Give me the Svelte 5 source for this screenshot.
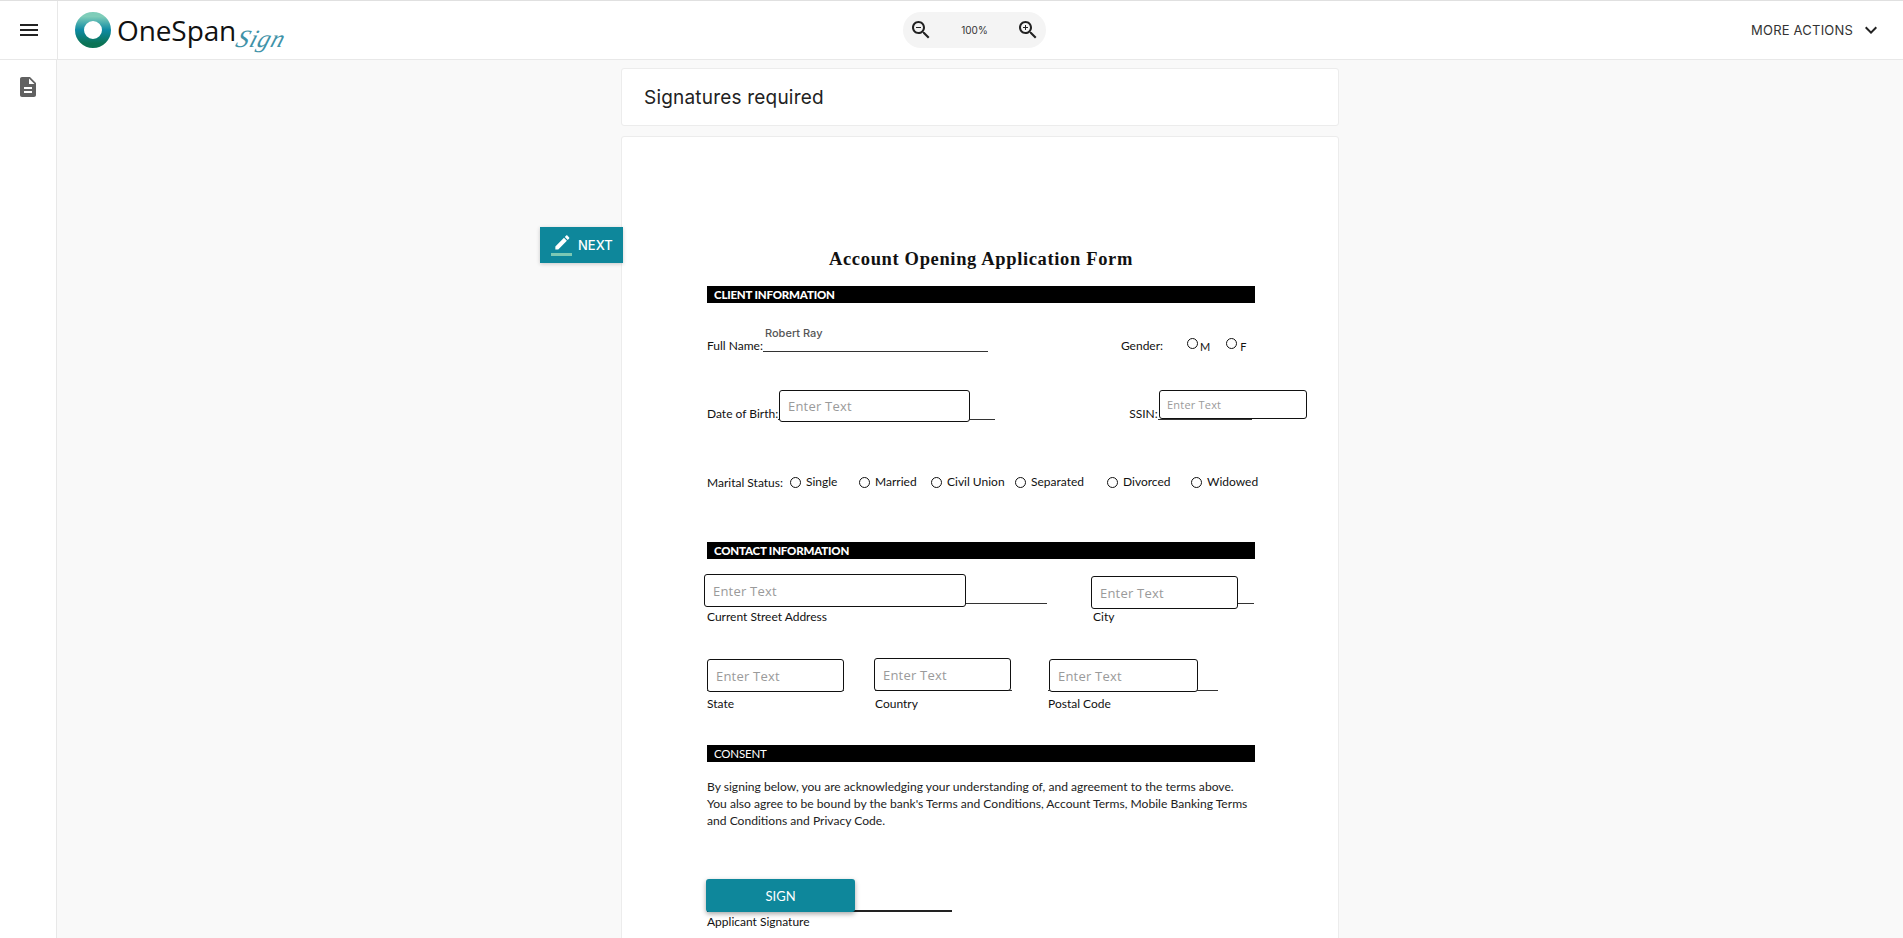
<script>
  const fields = [
    { x: 157, y: 253, w: 191, h: 32, size: 13 },
    { x: 537, y: 253, w: 148, h: 29, size: 11, pad: 7 },
    { x: 82, y: 437, w: 262, h: 33, size: 13 },
    { x: 469, y: 439, w: 147, h: 33, size: 13 },
    { x: 85, y: 522, w: 137, h: 33, size: 13 },
    { x: 252, y: 521, w: 137, h: 33, size: 13 },
    { x: 427, y: 522, w: 149, h: 33, size: 13 }
  ];
  const marital = [
    { label: "Single", w: 69 },
    { label: "Married", w: 72 },
    { label: "Civil Union", w: 84 },
    { label: "Separated", w: 92 },
    { label: "Divorced", w: 84 },
    { label: "Widowed", w: 66 }
  ];
</script>

<div class="app">
  <header class="topbar">
    <button class="menu" aria-label="Menu">
      <svg width="24" height="24" viewBox="0 0 24 24"><path d="M3 18h18v-2H3v2zm0-5h18v-2H3v2zm0-7v2h18V6H3z" fill="#222"/></svg>
    </button>
    <div class="logo">
      <svg width="38" height="38" viewBox="0 0 38 38">
        <defs>
          <linearGradient id="ring" x1="0" y1="0" x2="0" y2="1">
            <stop offset="0" stop-color="#7fcdb9"/>
            <stop offset="0.5" stop-color="#0e8aa3"/>
            <stop offset="1" stop-color="#0b7355"/>
          </linearGradient>
        </defs>
        <circle cx="19" cy="19" r="13.5" fill="none" stroke="url(#ring)" stroke-width="9"/>
      </svg>
      <span class="brand">OneSpan</span>
      <span class="sign">Sign</span>
    </div>
    <div class="zoom">
      <svg width="24" height="24" viewBox="0 0 24 24"><path d="M15.5 14h-.79l-.28-.27C15.41 12.59 16 11.11 16 9.5 16 5.91 13.09 3 9.5 3S3 5.91 3 9.5 5.91 16 9.5 16c1.61 0 3.09-.59 4.23-1.57l.27.28v.79l5 4.99L20.49 19l-4.99-5zm-6 0C7.01 14 5 11.99 5 9.5S7.01 5 9.5 5 14 7.01 14 9.5 11.99 14 9.5 14zM7 9h5v1H7z" fill="#222"/></svg>
      <span>100%</span>
      <svg width="24" height="24" viewBox="0 0 24 24"><path d="M15.5 14h-.79l-.28-.27C15.41 12.59 16 11.11 16 9.5 16 5.91 13.09 3 9.5 3S3 5.91 3 9.5 5.91 16 9.5 16c1.61 0 3.09-.59 4.23-1.57l.27.28v.79l5 4.99L20.49 19l-4.99-5zm-6 0C7.01 14 5 11.99 5 9.5S7.01 5 9.5 5 14 7.01 14 9.5 11.99 14 9.5 14zM12 10h-2v2H9v-2H7V9h2V7h1v2h2v1z" fill="#222"/></svg>
    </div>
    <div class="actions">
      <span>MORE ACTIONS</span>
      <svg width="24" height="24" viewBox="0 0 24 24"><path d="M7.41 8.59 12 13.17l4.59-4.58L18 10l-6 6-6-6z" fill="#222"/></svg>
    </div>
  </header>

  <div class="body">
    <aside class="sidebar">
      <svg width="24" height="24" viewBox="0 0 24 24"><path d="M14 2H6c-1.1 0-1.99.9-1.99 2L4 20c0 1.1.89 2 1.99 2H18c1.1 0 2-.9 2-2V8l-6-6zm2 16H8v-2h8v2zm0-4H8v-2h8v2zm-3-5V3.5L18.5 9H13z" fill="#616161"/></svg>
    </aside>

    <main class="main">
      <section class="column">
        <div class="notice">Signatures required</div>

        <article class="doc">
          <button class="next">
            <svg width="24" height="24" viewBox="0 0 24 24"><path d="M3 17.25V21h3.75L17.81 9.94l-3.75-3.75L3 17.25zM20.71 7.04c.39-.39.39-1.02 0-1.41l-2.34-2.34c-.39-.39-1.02-.39-1.41 0l-1.83 1.83 3.75 3.75 1.83-1.83z" fill="#fff" transform="translate(3 0) scale(.78)"/><rect x="1" y="20" width="21" height="3" fill="#7cc8b4"/></svg>
            <span>NEXT</span>
          </button>

          <h1>Account Opening Application Form</h1>
          <div class="bar">CLIENT INFORMATION</div>

          <div class="row name-row">
            <span class="robert">Robert Ray</span>
            <span>Full Name:</span><span class="line w-name"></span>
            <span class="gender">Gender:</span>
            <i class="radio r-m"></i><span class="small">M</span>
            <i class="radio r-f"></i><span class="small">F</span>
          </div>

          <div class="row dob-row">
            <span>Date of Birth:</span><span class="line w-dob"></span>
            <span class="ssin">SSIN:</span><span class="line w-ssin"></span>
          </div>

          <div class="row marital-row">
            <span class="marital-label">Marital Status:</span>
            {#each marital as item}
              <span class="option" style="width:{item.w}px"><i class="radio"></i>{item.label}</span>
            {/each}
          </div>

          <div class="bar contact">CONTACT INFORMATION</div>

          <div class="row address-row">
            <div class="cell c-address"><span class="line"></span><span>Current Street Address</span></div>
            <div class="cell c-city"><span class="line"></span><span>City</span></div>
          </div>

          <div class="row region-row">
            <div class="cell c-state"><span class="line"></span><span>State</span></div>
            <div class="cell c-country"><span class="line"></span><span>Country</span></div>
            <div class="cell c-postal"><span class="line"></span><span>Postal Code</span></div>
          </div>

          <div class="bar consent">CONSENT</div>

          <p>By signing below, you are acknowledging your understanding of, and agreement to the terms above.<br/>You also agree to be bound by the bank's Terms and Conditions, Account Terms, Mobile Banking Terms<br/>and Conditions and Privacy Code.</p>

          <div class="signature">
            <span class="line"></span>
            <span>Applicant Signature</span>
            <button class="sign-btn">SIGN</button>
          </div>

          {#each fields as f}
            <div class="field" style="left:{f.x}px;top:{f.y}px;width:{f.w}px;height:{f.h}px;font-size:{f.size}px;padding-left:{f.pad ?? 8}px">Enter Text</div>
          {/each}
        </article>
      </section>
    </main>
  </div>
</div>

<style>
  :global(body) {
    margin: 0;
    overflow: hidden;
    background: #f9f9f9;
  }

  .app {
    height: 938px;
    display: flex;
    flex-direction: column;
    overflow: hidden;
    font-family: "Inter", "Open Sans", sans-serif;
    color: #222;
  }

  .topbar {
    height: 58px;
    flex: none;
    display: grid;
    grid-template-columns: 58px 1fr auto 1fr;
    align-items: center;
    background: #fff;
    border-top: 1px solid #e0e0e0;
    border-bottom: 1px solid #e8e8e8;
  }

  .menu {
    height: 100%;
    padding: 0;
    border: 0;
    border-right: 1px solid #e8e8e8;
    background: none;
    display: flex;
    align-items: center;
    justify-content: center;
  }

  .logo {
    display: flex;
    align-items: center;
    padding-left: 16px;
  }

  .brand {
    margin-left: 5px;
    font-family: "Open Sans", sans-serif;
    font-size: 28px;
    letter-spacing: -0.1px;
    color: #111;
    line-height: 38px;
  }

  .sign {
    font-family: "Liberation Serif", serif;
    font-style: italic;
    font-size: 25px;
    color: #3f92a8;
    margin: 17px 0 0 1px;
    letter-spacing: 1px;
    transform: skewX(-18deg);
  }

  .zoom {
    width: 143px;
    height: 36px;
    box-sizing: border-box;
    padding: 0 6px;
    margin-left: -12px;
    border-radius: 18px;
    background: #f4f4f4;
    display: flex;
    align-items: center;
    justify-content: space-between;
    font-size: 10px;
    color: #333;
  }

  .actions {
    justify-self: end;
    display: flex;
    align-items: center;
    gap: 6px;
    padding-right: 20px;
    font-size: 13px;
    letter-spacing: 0.2px;
    color: #333;
  }

  .body {
    flex: 1;
    display: flex;
    min-height: 0;
  }

  .sidebar {
    width: 57px;
    flex: none;
    background: #fff;
    border-right: 1px solid #e8e8e8;
    display: flex;
    justify-content: center;
    padding-top: 15px;
    box-sizing: border-box;
  }

  .main {
    flex: 1;
    display: flex;
    justify-content: center;
    padding-top: 8px;
    background: #f9f9f9;
  }

  .column {
    width: 718px;
  }

  .notice {
    height: 58px;
    box-sizing: border-box;
    padding-left: 22px;
    display: flex;
    align-items: center;
    background: #fff;
    border: 1px solid #ececec;
    border-radius: 3px;
    font-size: 19px;
    letter-spacing: 0.2px;
    color: #222;
  }

  .doc {
    position: relative;
    height: 820px;
    margin-top: 10px;
    box-sizing: border-box;
    padding: 110px 83px 0 85px;
    background: #fff;
    border: 1px solid #ececec;
    border-radius: 3px;
    font-family: "Lato", sans-serif;
    font-size: 12px;
    color: #111;
  }

  .next {
    position: absolute;
    left: -82px;
    top: 90px;
    width: 83px;
    height: 36px;
    padding: 0 0 0 10px;
    border: 0;
    display: flex;
    align-items: center;
    gap: 4px;
    background: #0e879b;
    color: #fff;
    font: 500 13px "Inter", sans-serif;
    box-shadow: 0 1px 4px rgba(0, 0, 0, .2);
  }

  h1 {
    margin: 0;
    height: 24px;
    line-height: 24px;
    text-align: center;
    font-family: "Liberation Serif", serif;
    font-size: 18.5px;
    font-weight: 700;
    letter-spacing: 0.65px;
    color: #111;
  }

  .bar {
    height: 17px;
    line-height: 17px;
    margin-top: 15px;
    padding-left: 7px;
    background: #000;
    color: #fff;
    font-weight: 900;
    font-size: 11.5px;
    letter-spacing: -0.2px;
  }

  .bar.contact { margin-top: 52px; }
  .bar.consent { margin-top: 41px; font-weight: 400; }

  .row {
    position: relative;
    display: flex;
    align-items: flex-end;
  }

  .line {
    display: block;
    border-bottom: 1px solid #333;
  }

  .name-row { height: 47px; padding-top: 3px; }
  .dob-row { height: 47px; margin-top: 21px; }
  .marital-row { height: 16px; margin-top: 53px; }

  .w-name { width: 225px; margin-bottom: 1px; }
  .w-dob { width: 217px; margin-bottom: 1px; }
  .w-ssin { width: 94px; margin-bottom: 1px; }

  .robert {
    position: absolute;
    left: 58px;
    top: 23px;
    font-family: "Inter", sans-serif;
    font-size: 11px;
    font-weight: 500;
    color: #555;
  }

  .gender { margin-left: 133px; }
  .ssin { margin-left: 134px; }
  .small { font-size: 11px; }

  .radio {
    display: inline-block;
    width: 9px;
    height: 9px;
    border: 1px solid #111;
    border-radius: 50%;
    flex: none;
  }

  .r-m { margin: 0 2px 4px 24px; }
  .r-f { margin: 0 3px 4px 16px; }

  .marital-label { width: 83px; flex: none; }

  .option {
    display: flex;
    align-items: center;
    gap: 5px;
    flex: none;
    line-height: 16px;
  }

  .address-row { height: 43px; margin-top: 16px; }
  .region-row { height: 40px; margin-top: 46px; }

  .cell {
    display: flex;
    flex-direction: column;
    gap: 6px;
    position: absolute;
    top: 0;
    line-height: 14px;
  }

  .cell .line { height: 26px; }
  .address-row .cell .line { height: 28px; }

  .c-address { left: 0; width: 340px; }
  .c-city { left: 386px; width: 161px; }
  .c-state { left: 0; width: 137px; }
  .c-country { left: 168px; width: 137px; }
  .c-postal { left: 341px; width: 170px; }

  p {
    margin: 16px 0 0;
    font-size: 12.1px;
    line-height: 17px;
    color: #222;
  }

  .signature {
    position: relative;
    margin-top: 50px;
    width: 245px;
    display: flex;
    flex-direction: column;
    gap: 3px;
    line-height: 14px;
  }

  .signature .line {
    height: 31px;
    border-bottom: 2px solid #222;
  }

  .sign-btn {
    position: absolute;
    left: -1px;
    top: 0;
    width: 149px;
    height: 33px;
    border: 0;
    border-radius: 3px;
    background: #0e879b;
    color: #fff;
    font: 400 13px "Lato", sans-serif;
    box-shadow: 0 2px 5px rgba(0, 0, 0, .35);
  }

  .field {
    position: absolute;
    box-sizing: border-box;
    display: flex;
    align-items: center;
    background: #fff;
    border: 1px solid #111;
    border-radius: 3px;
    font-family: "Open Sans", sans-serif;
    color: #9a9a9a;
    letter-spacing: 0.2px;
  }
</style>
